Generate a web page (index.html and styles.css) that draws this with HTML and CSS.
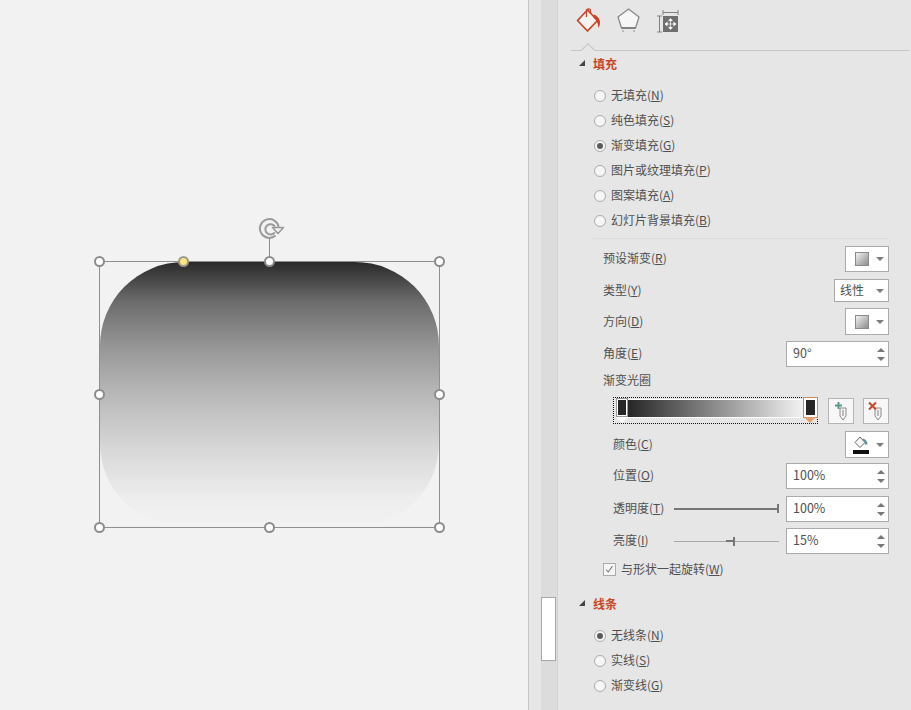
FILE: index.html
```html
<!DOCTYPE html>
<html lang="zh">
<head>
<meta charset="utf-8">
<title>设置形状格式</title>
<link rel="stylesheet" href="styles.css">
</head>
<body>
<div class="app">
  <main class="canvas">
    <svg class="rotate" width="28" height="24" viewBox="0 0 28 24">
      <path d="M17.5 17.6A9.4 9.4 0 1 1 20.6 9" fill="none" stroke="#9a9a9a" stroke-width="2"/>
      <path d="M16.8 14.4A5.2 5.2 0 1 1 17 8.6" fill="none" stroke="#9a9a9a" stroke-width="2"/>
      <path d="M14.5 9.5h11l-5.5 6z" fill="#f1f1f1" stroke="#9a9a9a" stroke-width="1.6" stroke-linejoin="round"/>
    </svg>
    <div class="stem"></div>
    <div class="selection">
      <div class="shape"></div>
      <span class="handle h-tl"></span>
      <span class="handle h-tc"></span>
      <span class="handle h-tr"></span>
      <span class="handle h-ml"></span>
      <span class="handle h-mr"></span>
      <span class="handle h-bl"></span>
      <span class="handle h-bc"></span>
      <span class="handle h-br"></span>
      <span class="handle adjust"></span>
    </div>
  </main>
  <div class="gutter"></div>
  <div class="track"><div class="thumb"></div></div>
  <aside class="panel">
    <div class="tabs">
      <svg class="tab-fill" width="28" height="28" viewBox="0 0 28 28">
        <path d="M13.500 4 3.500 14.500 13.500 25 23.500 14.500z" fill="#f8f3f0" stroke="#c8472a" stroke-width="1.800" stroke-linejoin="round"/>
        <path d="M12.500 11V5a2 2 0 0 1 4 0v3" fill="none" stroke="#c8472a" stroke-width="1.300"/>
        <path d="M20 8.500c3 1 6 4 6 8 0 2-.5 4-1.500 5.500-.5-4-1.500-8-5.500-11z" fill="#c8472a"/>
      </svg>
      <svg class="tab-shape" width="24" height="24" viewBox="0 0 24 24">
        <path d="M12.500 1 23 9 19.500 20H5.500L2 9z" fill="#f6f6f6" stroke="#8a8a8a" stroke-width="1.300" stroke-linejoin="round"/>
        <path d="M5.500 20h14M6.500 23h1M17.500 23h1" stroke="#777" stroke-width="1.500"/>
      </svg>
      <svg class="tab-size" width="24" height="24" viewBox="0 0 24 24">
        <path d="M7 3.500h15M7 1v5M22 1v5M1 7h5M1 23h5M3.500 7v16" fill="none" stroke="#808080" stroke-width="1"/>
        <rect x="7" y="7" width="15" height="16" fill="#6f6f6f"/>
        <path d="M14.500 10v10M9.500 15h10M14.500 9.500l-1.800 2.200h3.600zM14.500 20.500l-1.800-2.200h3.600zM9 15l2.200-1.800v3.600zM20 15l-2.200-1.800v3.600z" fill="#fff" stroke="#fff" stroke-width=".7"/>
      </svg>
      <span class="notch"></span>
    </div>

    <div class="section-head"><span class="tri"></span><span>填充</span></div>
    <ul class="radios">
      <li><span class="radio"></span><span class="txt">无填充(<u>N</u>)</span></li>
      <li><span class="radio"></span><span class="txt">纯色填充(<u>S</u>)</span></li>
      <li><span class="radio on"></span><span class="txt">渐变填充(<u>G</u>)</span></li>
      <li><span class="radio"></span><span class="txt">图片或纹理填充(<u>P</u>)</span></li>
      <li><span class="radio"></span><span class="txt">图案填充(<u>A</u>)</span></li>
      <li><span class="radio"></span><span class="txt">幻灯片背景填充(<u>B</u>)</span></li>
    </ul>
    <div class="divider"></div>

    <div class="row r-preset">
      <span class="lbl">预设渐变(<u>R</u>)</span>
      <button class="pick"><i class="swatch"></i><i class="caret"></i></button>
    </div>
    <div class="row r-type">
      <span class="lbl">类型(<u>Y</u>)</span>
      <button class="pick pick-text"><span class="lbl">线性</span><i class="caret"></i></button>
    </div>
    <div class="row r-dir">
      <span class="lbl">方向(<u>D</u>)</span>
      <button class="pick"><i class="swatch"></i><i class="caret"></i></button>
    </div>
    <div class="row r-angle">
      <span class="lbl">角度(<u>E</u>)</span>
      <div class="spin"><span class="lbl">90°</span><span class="arrows"><i class="up"></i><i class="down"></i></span></div>
    </div>
    <div class="stops-label">渐变光圈</div>
    <div class="stops">
      <div class="stops-bar">
        <div class="ramp"></div>
        <span class="stop stop-a"></span>
        <span class="stop stop-b"></span>
      </div>
      <button class="stop-btn" title="添加">
        <svg width="18" height="20" viewBox="0 0 18 20">
          <path d="M8 7h6v8l-3 4-3-4z" fill="#f4f4f4" stroke="#8a8a8a"/>
          <path d="M10 9h2v6h-2z" fill="#bbb"/>
          <path d="M3 4.500h7M6.500 1v7" stroke="#5c9a8c" stroke-width="2"/>
        </svg>
      </button>
      <button class="stop-btn" title="删除">
        <svg width="18" height="20" viewBox="0 0 18 20">
          <path d="M8 7h6v8l-3 4-3-4z" fill="#f4f4f4" stroke="#8a8a8a"/>
          <path d="M10 9h2v6h-2z" fill="#bbb"/>
          <path d="M2 1.500l7 7M9 1.500l-7 7" stroke="#c8472a" stroke-width="2"/>
        </svg>
      </button>
    </div>
    <div class="row inset r-color">
      <span class="lbl">颜色(<u>C</u>)</span>
      <button class="pick">
        <svg width="18" height="20" viewBox="0 0 18 20">
          <path d="M8 2 3 7.500 8 12.500 13 7.500z" fill="#f7f7f7" stroke="#666"/>
          <path d="M11 3.500c3 1 4.500 3 4.500 6l-2.500 0c0-2-1-3.500-3-4.500z" fill="#5f8fa8"/>
          <rect x="1" y="15" width="16" height="4" fill="#111"/>
        </svg>
        <i class="caret"></i>
      </button>
    </div>
    <div class="row inset r-pos">
      <span class="lbl">位置(<u>O</u>)</span>
      <div class="spin"><span class="lbl">100%</span><span class="arrows"><i class="up"></i><i class="down"></i></span></div>
    </div>
    <div class="row inset r-alpha">
      <span class="lbl">透明度(<u>T</u>)</span>
      <span class="slider full"><i class="knob k-end"></i></span>
      <div class="spin"><span class="lbl">100%</span><span class="arrows"><i class="up"></i><i class="down"></i></span></div>
    </div>
    <div class="row inset r-bright">
      <span class="lbl">亮度(<u>I</u>)</span>
      <span class="slider"><i class="fillbit"></i><i class="knob k-mid"></i></span>
      <div class="spin"><span class="lbl">15%</span><span class="arrows"><i class="up"></i><i class="down"></i></span></div>
    </div>
    <div class="check-row">
      <span class="check">
        <svg width="13" height="13" viewBox="0 0 13 13"><path d="M2.500 6.500l2.500 3L10 2.500" fill="none" stroke="#777" stroke-width="1.200"/></svg>
      </span>
      <span class="txt">与形状一起旋转(<u>W</u>)</span>
    </div>

    <div class="section-head head-2"><span class="tri"></span><span>线条</span></div>
    <ul class="radios">
      <li><span class="radio on"></span><span class="txt">无线条(<u>N</u>)</span></li>
      <li><span class="radio"></span><span class="txt">实线(<u>S</u>)</span></li>
      <li><span class="radio"></span><span class="txt">渐变线(<u>G</u>)</span></li>
    </ul>
  </aside>
</div>
</body>
</html>
```
FILE: styles.css
```css
* { box-sizing: border-box; }
html, body { margin: 0; height: 100%; overflow: hidden; }
body {
  font-family: "Noto Sans CJK SC", "Liberation Sans", sans-serif;
  font-size: 12px;
  color: #505050;
}
button { font: inherit; color: inherit; padding: 0; }
u { text-underline-offset: 1px; }
i { display: block; }
.txt { padding-bottom: 2px; }
.lbl { padding-bottom: 3px; }

.app { display: flex; width: 911px; height: 710px; background: #e6e6e6; }

/* Slide canvas */
.canvas { position: relative; width: 528px; background: #f2f2f2; flex: none; }
.selection {
  position: absolute; left: 99px; top: 261px; width: 341px; height: 267px;
  border: 1px solid #8f8f8f;
}
.shape {
  position: absolute; inset: 0;
  border-radius: 84px;
  background: linear-gradient(180deg, #2a2a2a 0%, #6c6c6c 15%, #989898 33%, #b8b8b8 50%, #d8d8d8 71%, #eeeeee 90%, #f2f2f2 100%);
}
.handle {
  position: absolute; width: 11px; height: 11px; border-radius: 50%;
  background: #fff; border: 2px solid #8c8c8c;
}
.h-tl { left: -6px; top: -6px; }
.h-tc { left: 164px; top: -6px; }
.h-tr { left: 334px; top: -6px; }
.h-ml { left: -6px; top: 127px; }
.h-mr { left: 334px; top: 127px; }
.h-bl { left: -6px; top: 260px; }
.h-bc { left: 164px; top: 260px; }
.h-br { left: 334px; top: 260px; }
.adjust { left: 78px; top: -6px; background: #ffe580; border-color: #9a9a8a; }
.rotate { position: absolute; left: 258px; top: 218px; }
.stem { position: absolute; left: 269px; top: 238px; width: 1px; height: 23px; background: #8f8f8f; }

/* Chrome between canvas and panel */
.gutter { width: 13px; flex: none; border-left: 1px solid #c4c4c4; background: #e6e6e6; }
.track { width: 16px; flex: none; background: #dcdcdc; padding-top: 597px; }
.thumb { width: 15px; height: 64px; background: #fff; border: 1px solid #a6a6a6; }

/* Panel */
.panel { flex: 1; border-left: 1px solid #d2d2d2; padding-left: 13px; min-width: 0; }
.tabs {
  position: relative; height: 51px; width: 338px;
  border-bottom: 1px solid #c6c6c6;
}
.tab-fill { position: absolute; left: 3px; top: 6px; }
.tab-shape { position: absolute; left: 45px; top: 8px; }
.tab-size { position: absolute; left: 85px; top: 9px; }
.notch {
  position: absolute; left: 12px; top: 45px; width: 10px; height: 10px;
  background: #e6e6e6; border-left: 1px solid #c6c6c6; border-top: 1px solid #c6c6c6;
  transform: rotate(45deg);
}
.section-head {
  display: flex; align-items: center; height: 24px;
  color: #c8472a; font-weight: 700; padding-left: 8px; gap: 8px;
}
.tri {
  width: 0; height: 0;
  border-left: 6px solid transparent; border-bottom: 6px solid #444;
}
.head-2 { margin-top: 12px; }

.radios { list-style: none; margin: 8px 0 0; padding: 0 0 0 23px; }
.radios li { display: flex; align-items: center; height: 25px; gap: 5px; }
.radio {
  width: 12px; height: 12px; border-radius: 50%; flex: none;
  border: 1px solid #ababab; background: #f6f6f6; position: relative;
}
.radio.on::after {
  content: ""; position: absolute; left: 2px; top: 2px;
  width: 6px; height: 6px; border-radius: 50%; background: #5a5a5a;
}
.divider { height: 1px; margin: 5px 0 0 22px; background: #dcdcdc; width: 296px; }

.row {
  display: flex; align-items: center; justify-content: space-between;
  width: 286px; margin-left: 32px;
}
.row.inset { margin-left: 42px; width: 276px; justify-content: flex-start; }
.row.inset > span:first-child { width: 61px; flex: none; }
.row.inset .spin, .row.inset .pick { margin-left: auto; }
.r-preset { height: 26px; margin-top: 7px; }
.r-type { height: 23px; margin-top: 7px; }
.r-dir { height: 27px; margin-top: 6px; }
.r-angle { height: 26px; margin-top: 6px; }
.r-color { height: 27px; margin-top: 7px; }
.r-pos { height: 26px; margin-top: 5px; }
.r-alpha { height: 26px; margin-top: 7px; }
.r-bright { height: 26px; margin-top: 6px; }

.pick {
  display: flex; align-items: center; justify-content: flex-end; gap: 7px;
  width: 44px; height: 100%; padding-right: 4px;
  background: #fff; border: 1px solid #ababab;
}
.pick svg { margin-right: -1px; }
.pick-text { width: 55px; justify-content: space-between; padding: 0 4px 0 5px; }
.swatch {
  width: 14px; height: 14px; border: 1px solid #8a8a8a;
  background: linear-gradient(135deg, #f2f2f2, #8c8c8c);
}
.caret {
  width: 0; height: 0;
  border: 4px solid transparent; border-top: 4px solid #7c7c7c; border-bottom: 0;
}
.spin {
  display: flex; align-items: center; justify-content: space-between;
  width: 103px; height: 100%; padding: 0 3px 0 6px;
  background: #fff; border: 1px solid #ababab; font-size: 12.500px;
}
.arrows { display: flex; flex-direction: column; gap: 5px; }
.up, .down { width: 0; height: 0; border: 4px solid transparent; }
.up { border-top: 0; border-bottom: 4px solid #777; }
.down { border-bottom: 0; border-top: 4px solid #777; }

.stops-label { margin: 3px 0 0 32px; height: 20px; line-height: 20px; }
.stops {
  display: flex; align-items: center; margin: 7px 0 0 42px; width: 276px; height: 27px;
}
.stops-bar {
  position: relative; width: 205px; height: 27px;
  border: 1px dotted #111; margin-right: 10px;
}
.ramp {
  position: absolute; left: 13px; right: 13px; top: 1px; height: 19px;
  border: 1px solid #fff;
  background: linear-gradient(90deg, #262626, #f3f3f3);
}
.stop {
  position: absolute; top: 0; width: 12px; height: 19px;
  background: #262626; border: 2px solid #fff; outline: 1px solid #9a9a9a; outline-offset: -1px;
}
.stop::after {
  content: ""; position: absolute; left: -2px; top: 17px;
  border-left: 6px solid transparent; border-right: 6px solid transparent;
  border-top: 6px solid #fff;
}
.stop-a { left: 2px; }
.stop-b { right: 0; width: 13px; outline: 1px solid #c98a58; outline-offset: 0; }
.stop-b::after { border-left-width: 6.500px; border-right-width: 6.500px; border-top-color: #e2a070; }
.stop-btn {
  display: flex; align-items: center; justify-content: center;
  width: 26px; height: 26px; background: #f7f7f7; border: 1px solid #b4b4b4;
}
.stop-btn + .stop-btn { margin-left: 9px; }

.slider { position: relative; width: 105px; height: 1px; background: #a8a8a8; }
.slider.full { height: 2px; background: #767676; }
.knob { position: absolute; width: 2px; height: 9px; background: #767676; }
.k-end { right: 0; top: -4px; }
.k-mid { left: 59px; top: -4px; }
.fillbit { position: absolute; left: 52px; top: -1px; width: 8px; height: 2px; background: #767676; }

.check-row { display: flex; align-items: center; height: 20px; margin: 5px 0 0 32px; gap: 5px; }
.check {
  width: 13px; height: 13px; flex: none; background: #f6f6f6; border: 1px solid #ababab;
  display: flex; align-items: center; justify-content: center;
}
```
